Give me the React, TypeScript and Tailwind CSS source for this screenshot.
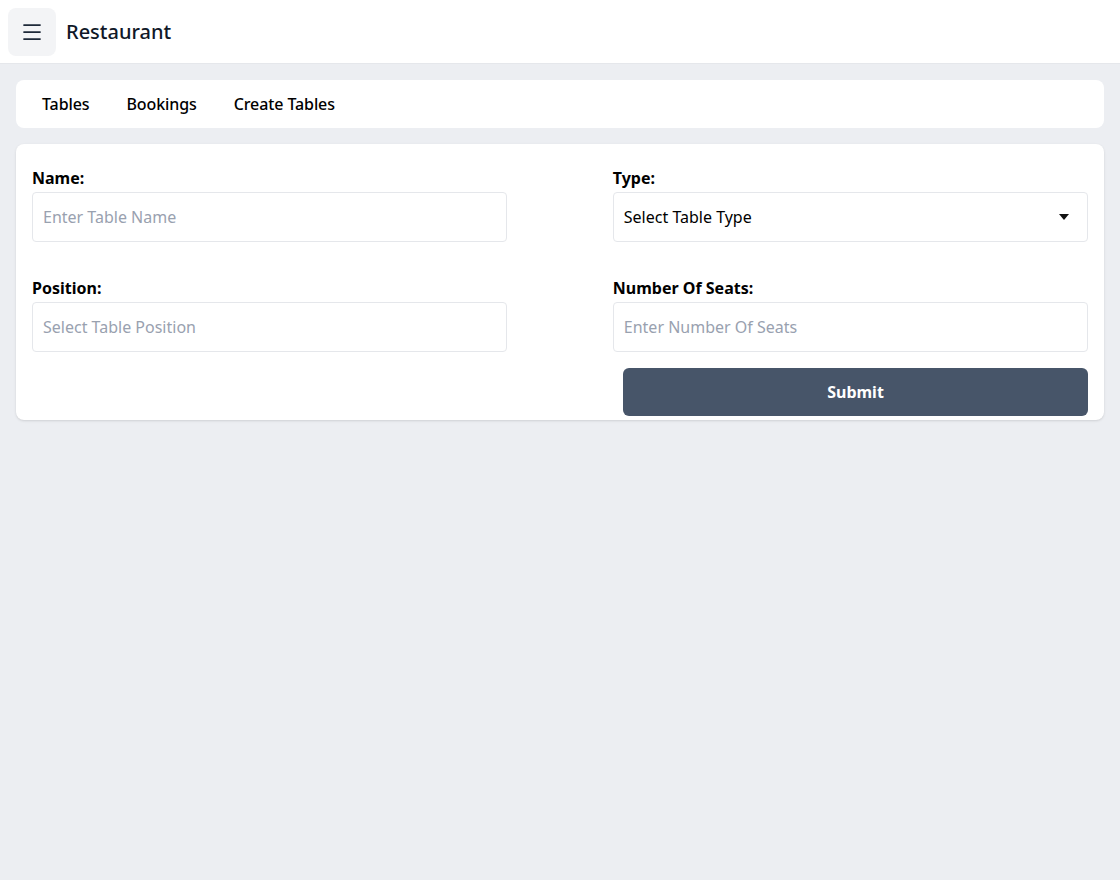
import { Menu } from 'lucide-react';

const tabs = ['Tables', 'Bookings', 'Create Tables'];

export default function App() {
  return (
    <div
      className="min-h-screen bg-[#eceef2] text-black"
      style={{ fontFamily: '"Noto Sans", "Open Sans", sans-serif' }}
    >
      <header className="flex h-16 items-center gap-2.5 border-b border-gray-200 bg-white px-2">
        <button className="flex h-12 w-12 items-center justify-center rounded-lg bg-gray-100">
          <Menu className="h-6 w-6 text-gray-800" strokeWidth={1.75} />
        </button>
        <h1 className="text-xl font-medium text-gray-900">Restaurant</h1>
      </header>

      <main className="flex flex-col gap-4 p-4">
        <nav className="flex h-12 items-center gap-[37px] rounded-lg bg-white px-[26px]">
          {tabs.map((t) => (
            <span key={t} className="text-base font-medium tracking-[-0.1px]">
              {t}
            </span>
          ))}
        </nav>

        <form className="rounded-lg bg-white px-4 pb-1 pt-[22px] shadow-sm">
          <div className="flex justify-between">
            <div className="flex w-[45%] flex-col">
              <label className="mb-0.5 text-base font-bold leading-6">Name:</label>
              <input
                placeholder="Enter Table Name"
                className="h-[50px] rounded border border-gray-200 px-2.5 text-base placeholder:text-gray-400"
              />
            </div>
            <div className="flex w-[45%] flex-col">
              <label className="mb-0.5 text-base font-bold leading-6">Type:</label>
              <div className="flex h-[50px] items-center justify-between rounded border border-gray-200 px-2.5">
                <span className="text-base">Select Table Type</span>
                <svg width="10" height="6" viewBox="0 0 10 6" className="mr-2">
                  <path d="M0 0h10L5 6z" fill="#111" />
                </svg>
              </div>
            </div>
          </div>

          <div className="mt-[34px] flex justify-between">
            <div className="flex w-[45%] flex-col">
              <label className="mb-0.5 text-base font-bold leading-6">Position:</label>
              <input
                placeholder="Select Table Position"
                className="h-[50px] rounded border border-gray-200 px-2.5 text-base placeholder:text-gray-400"
              />
            </div>
            <div className="flex w-[45%] flex-col">
              <label className="mb-0.5 text-base font-bold leading-6">Number Of Seats:</label>
              <input
                placeholder="Enter Number Of Seats"
                className="h-[50px] rounded border border-gray-200 px-2.5 text-base placeholder:text-gray-400"
              />
            </div>
          </div>

          <div className="mt-4 flex justify-end">
            <button
              type="button"
              className="h-12 w-[465px] rounded-md bg-[#475569] text-base font-bold text-white"
            >
              Submit
            </button>
          </div>
        </form>
      </main>
    </div>
  );
}
